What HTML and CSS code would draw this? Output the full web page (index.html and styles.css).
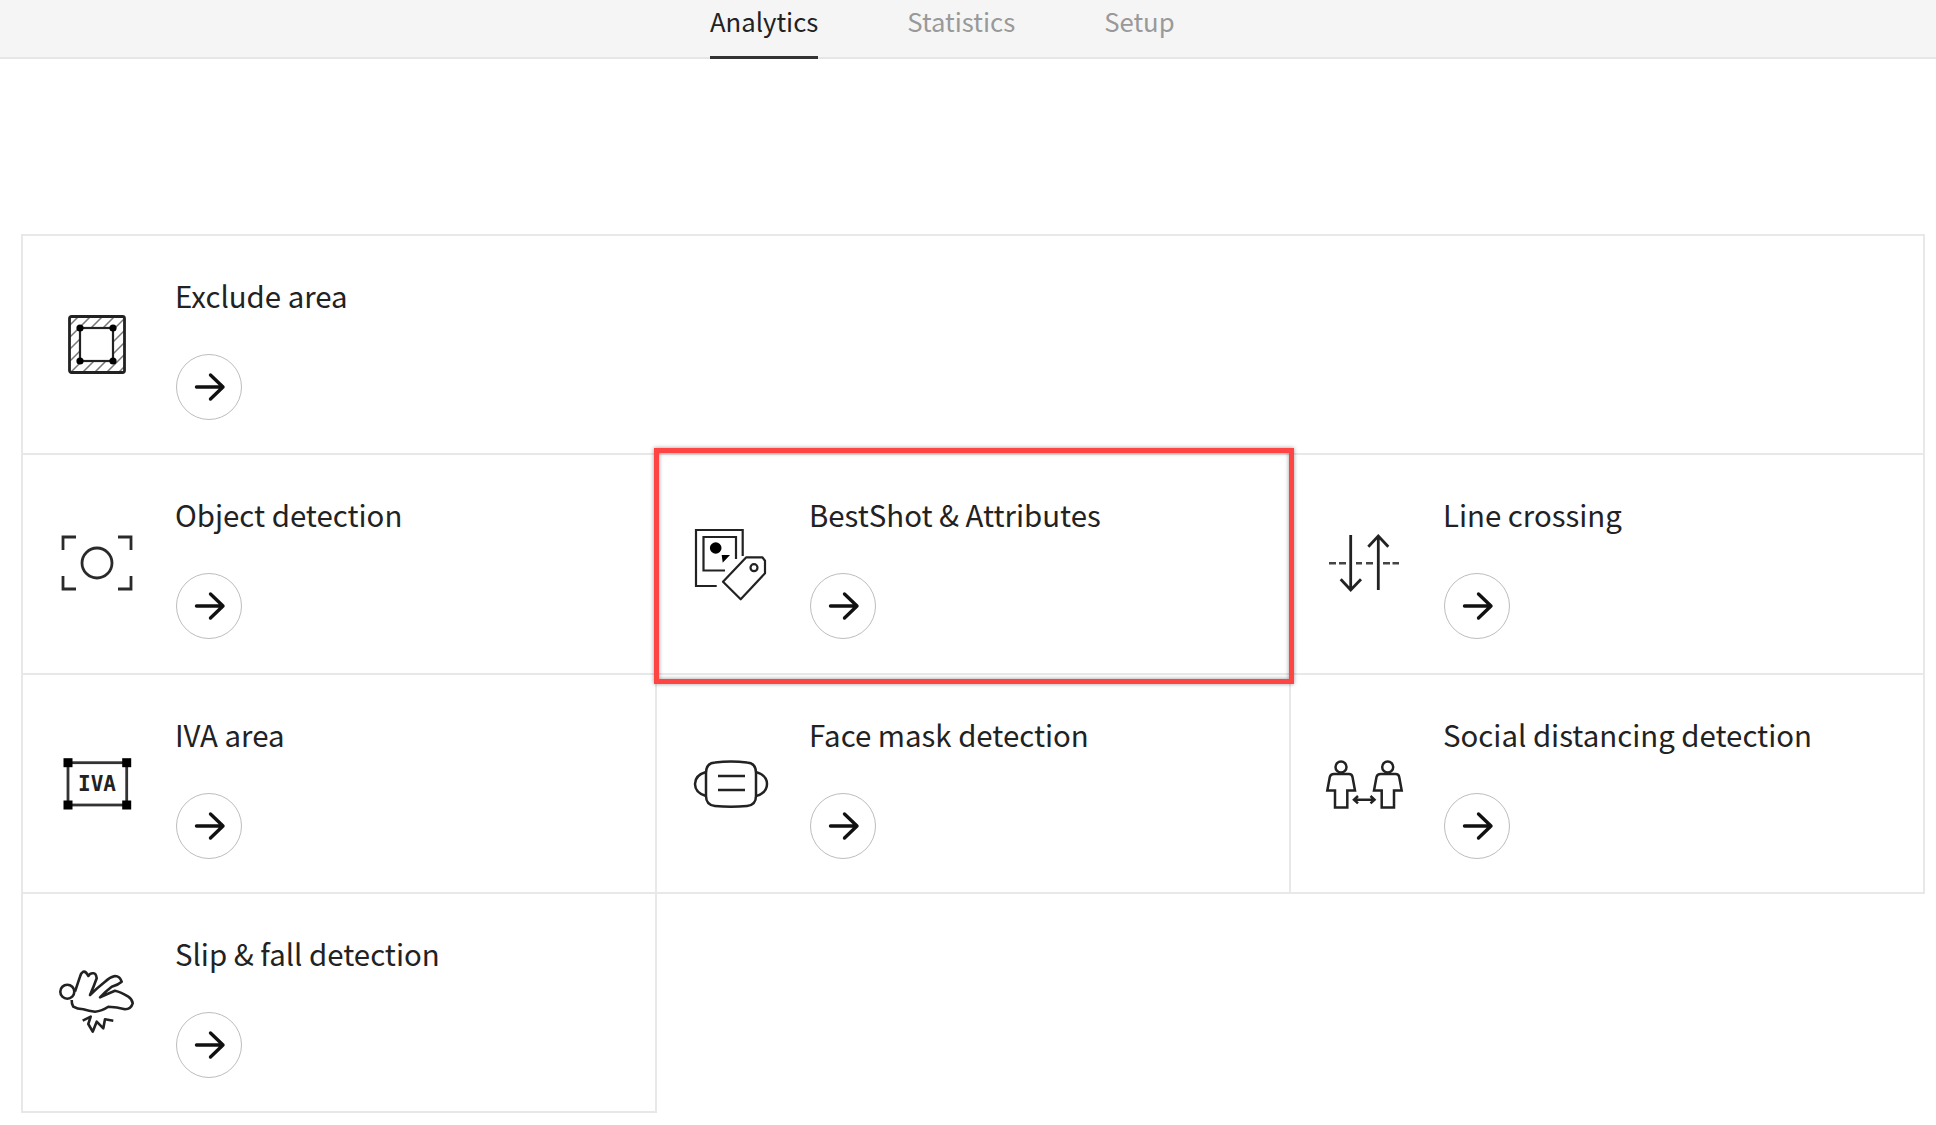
FILE: index.html
```html
<!DOCTYPE html>
<html lang="en">
<head>
    <meta charset="UTF-8">
    <title>Analytics</title>
    <link rel="stylesheet" href="styles.css">
</head>

<body>
    <!-- shared arrow for the round buttons -->
    <svg class="defs" width="0" height="0">
        <symbol id="arrow" viewBox="0 0 66 66">
            <path d="M20.500 33H47M34.500 21L47 33L34.500 45" fill="none" stroke="#111" stroke-width="3.400" stroke-linecap="round" stroke-linejoin="round"/>
        </symbol>
    </svg>

    <nav class="tabs">
        <a class="tab active">Analytics</a>
        <a class="tab">Statistics</a>
        <a class="tab">Setup</a>
    </nav>

    <div class="grid">
        <div class="cell wide">
            <svg class="icon" viewBox="0 0 72 72">
                <defs>
                    <clipPath id="band"><path clip-rule="evenodd" d="M8 8H64V65H8ZM19 20V53H52V20Z"/></clipPath>
                </defs>
                <g clip-path="url(#band)" stroke="#777" stroke-width="1.500">
                    <path d="M4 22L20 6M4 34L32 6M4 46L44 6M4 58L56 6M4 70L68 6M16 70L68 18M28 70L68 30M40 70L68 42M52 70L68 54"/>
                </g>
                <rect x="19" y="20" width="33" height="33" fill="#fff"/>
                <rect x="8.500" y="8.500" width="55" height="56" rx="2" fill="none" stroke="#222" stroke-width="2.800"/>
                <rect x="19" y="20" width="33" height="33" fill="none" stroke="#222" stroke-width="2.200"/>
                <circle cx="19" cy="20" r="3.600"/><circle cx="52" cy="20" r="3.600"/>
                <circle cx="19" cy="53" r="3.600"/><circle cx="52" cy="53" r="3.600"/>
            </svg>
            <div class="body">
                <div class="title">Exclude area</div>
                <button class="go"><svg width="66" height="66"><use href="#arrow"/></svg></button>
            </div>
        </div>

        <div class="cell">
            <svg class="icon" viewBox="0 0 72 72">
                <g fill="none" stroke="#2a2a2a" stroke-width="2.800">
                    <path d="M2 23V10H15M57 10H70V23M2 49V62H15M57 62H70V49"/>
                    <circle cx="36" cy="36" r="15"/>
                </g>
            </svg>
            <div class="body">
                <div class="title">Object detection</div>
                <button class="go"><svg width="66" height="66"><use href="#arrow"/></svg></button>
            </div>
        </div>

        <div class="cell marked">
            <svg class="icon" viewBox="0 0 72 72">
                <g fill="none" stroke="#222" stroke-width="2.200">
                    <path d="M47.700 29V3H1V59H21.700"/>
                    <path d="M41 32V10H8.500V43.500H30"/>
                    <path d="M28 54.700L51.300 30.300H67.300L70 33.700V46.300L45.700 72.300Z" stroke-linejoin="round"/>
                    <circle cx="59" cy="40.700" r="3.500"/>
                </g>
                <circle cx="20.700" cy="21" r="5.800"/>
                <path d="M26.700 28H35L27.700 35.700Z"/>
            </svg>
            <div class="body">
                <div class="title">BestShot &amp; Attributes</div>
                <button class="go"><svg width="66" height="66"><use href="#arrow"/></svg></button>
            </div>
        </div>

        <div class="cell">
            <svg class="icon" viewBox="0 0 72 72">
                <g fill="none" stroke="#222" stroke-width="2.800">
                    <path d="M21.700 8V63M11.700 52.300L21.700 63L32 52.300"/>
                    <path d="M49.300 9V63M39.300 19.700L49.300 9L59.300 19.700"/>
                    <path d="M0 36.300H7M10 36.300H17M27 36.300H33M37 36.300H44M54 36.300H61M63.500 36.300H70" stroke-width="2.400" stroke="#444"/>
                </g>
            </svg>
            <div class="body">
                <div class="title">Line crossing</div>
                <button class="go"><svg width="66" height="66"><use href="#arrow"/></svg></button>
            </div>
        </div>

        <div class="cell">
            <svg class="icon" viewBox="0 0 72 72">
                <rect x="7" y="15.700" width="58.700" height="42.300" fill="none" stroke="#333" stroke-width="2.800"/>
                <rect x="2.500" y="11.200" width="9" height="9"/><rect x="61.200" y="11.200" width="9" height="9"/>
                <rect x="2.500" y="53.500" width="9" height="9"/><rect x="61.200" y="53.500" width="9" height="9"/>
                <text class="iva" x="36" y="44" text-anchor="middle">IVA</text>
            </svg>
            <div class="body">
                <div class="title">IVA area</div>
                <button class="go"><svg width="66" height="66"><use href="#arrow"/></svg></button>
            </div>
        </div>

        <div class="cell">
            <svg class="icon" viewBox="0 0 72 72">
                <g fill="none" stroke="#222" stroke-width="2.500">
                    <path d="M20 15.500Q36 13.500 52 15.500Q61 16 61 26V49Q61 58 52 59Q36 60.500 20 59Q11 58 11 49V26Q11 16 20 15.500Z"/>
                    <path d="M11 25C4 27 0 31 0 37C0 43 4 47 11 49"/>
                    <path d="M61 25C68 27 72 31 72 37C72 43 68 47 61 49"/>
                    <path d="M23 29H50M23 43H50"/>
                </g>
            </svg>
            <div class="body">
                <div class="title">Face mask detection</div>
                <button class="go"><svg width="66" height="66"><use href="#arrow"/></svg></button>
            </div>
        </div>

        <div class="cell">
            <svg class="icon" viewBox="0 0 72 72">
                <g fill="none" stroke="#222" stroke-width="2.500">
                    <circle cx="12" cy="20" r="5.500"/>
                    <path d="M5 27H20Q23 27 23.500 30L26 43.500H18.300V60.500H6V43.500H-1.700L0.800 30Q1.500 27 5 27Z"/>
                    <circle cx="58.700" cy="20" r="5.500"/>
                    <path d="M51.700 27H66.700Q69.700 27 70.200 30L72.700 43.500H65V60.500H52.700V43.500H45L47.500 30Q48.200 27 51.700 27Z"/>
                    <path d="M25 52.700H45.500M29 49L25 52.700L29 56.400M41.500 49L45.500 52.700L41.500 56.400"/>
                </g>
            </svg>
            <div class="body">
                <div class="title">Social distancing detection</div>
                <button class="go"><svg width="66" height="66"><use href="#arrow"/></svg></button>
            </div>
        </div>

        <div class="cell">
            <svg class="icon" viewBox="0 0 72 72">
                <g fill="none" stroke="#222" stroke-width="2.600" stroke-linejoin="round">
                    <circle cx="6.300" cy="25.700" r="7"/>
                    <path d="M10.700 34Q10.500 38 12.300 40.700Q16 43 22.300 43.300Q28 45 34 45.700Q41 45 47.300 40.700Q56 41 64 43.300Q70 43 71.700 37.300Q71 33 67.300 30.700Q60 26 54 24.700Q46 28 39 31.300Q45 25 50.700 20.700Q57 19 60.700 15.700Q59 10 54 10Q49 11 44 15.700Q36 22 29 29Q33 20 35.700 12.300Q35 7 32.300 7.300Q29 7 27.300 10Q25 5 22.300 5.700Q20 7 19 10.700L14 25.700"/>
                    <path d="M21.700 54.700L29.700 50.700L27.300 58L31.700 65.700L35.700 55.700L42.300 62.300L44 53.300L52.300 54.700"/>
                </g>
            </svg>
            <div class="body">
                <div class="title">Slip &amp; fall detection</div>
                <button class="go"><svg width="66" height="66"><use href="#arrow"/></svg></button>
            </div>
        </div>
    </div>
</body>
</html>
```
FILE: styles.css
```css
body {
    margin: 0;
    min-height: 1125px;
    background: #fff;
    font-family: "Noto Sans CJK KR", "Noto Sans", sans-serif;
    color: #222;
}

.defs {
    display: block;
    height: 0;
}

.tabs {
    display: flex;
    gap: 89px;
    height: 57px;
    padding-left: 710px;
    background: #f5f5f5;
    border-bottom: 2px solid #e6e6e6;
}

.tab {
    height: 59px;
    box-sizing: border-box;
    font-size: 25.700px;
    line-height: 42px;
    color: #999;
}

.tab.active {
    color: #222;
    border-bottom: 3px solid #333;
}

.grid {
    display: grid;
    grid-template-columns: repeat(3, 634px);
    grid-auto-rows: 219.300px;
    margin: 175px 0 0 21px;
}

.cell {
    position: relative;
    display: flex;
    align-items: flex-start;
    gap: 42px;
    padding: 0 0 0 38px;
    border: 2px solid #e8e8e8;
    margin: 0 -2px -2px 0;
}

.cell.wide {
    grid-column: 1 / -1;
}

.cell.marked {
    z-index: 1;
}

/* red call-out drawn over the cell */
.cell.marked::after {
    content: "";
    position: absolute;
    top: -7px;
    left: -3px;
    right: -5px;
    bottom: -11.400px;
    border: 5px solid #ff4444;
    box-shadow: 0 0 4px rgba(0, 0, 0, 0.4), inset 0 0 4px rgba(0, 0, 0, 0.4);
}

.icon {
    flex: none;
    width: 72px;
    height: 72px;
    margin-top: 72px;
    overflow: visible;
}

.body {
    display: flex;
    flex-direction: column;
    align-items: flex-start;
    padding-top: 39px;
}

.title {
    font-size: 29.400px;
    line-height: 40px;
    color: #222;
}

.go {
    width: 66px;
    height: 66px;
    margin: 39px 0 0 1px;
    padding: 0;
    box-sizing: border-box;
    display: flex;
    align-items: center;
    justify-content: center;
    background: #fff;
    border: 1.500px solid #bdbdbd;
    border-radius: 50%;
}

.go svg {
    flex: none;
}

.iva {
    font-family: "DejaVu Sans Mono", monospace;
    font-weight: bold;
    font-size: 21px;
    fill: #222;
}
```
